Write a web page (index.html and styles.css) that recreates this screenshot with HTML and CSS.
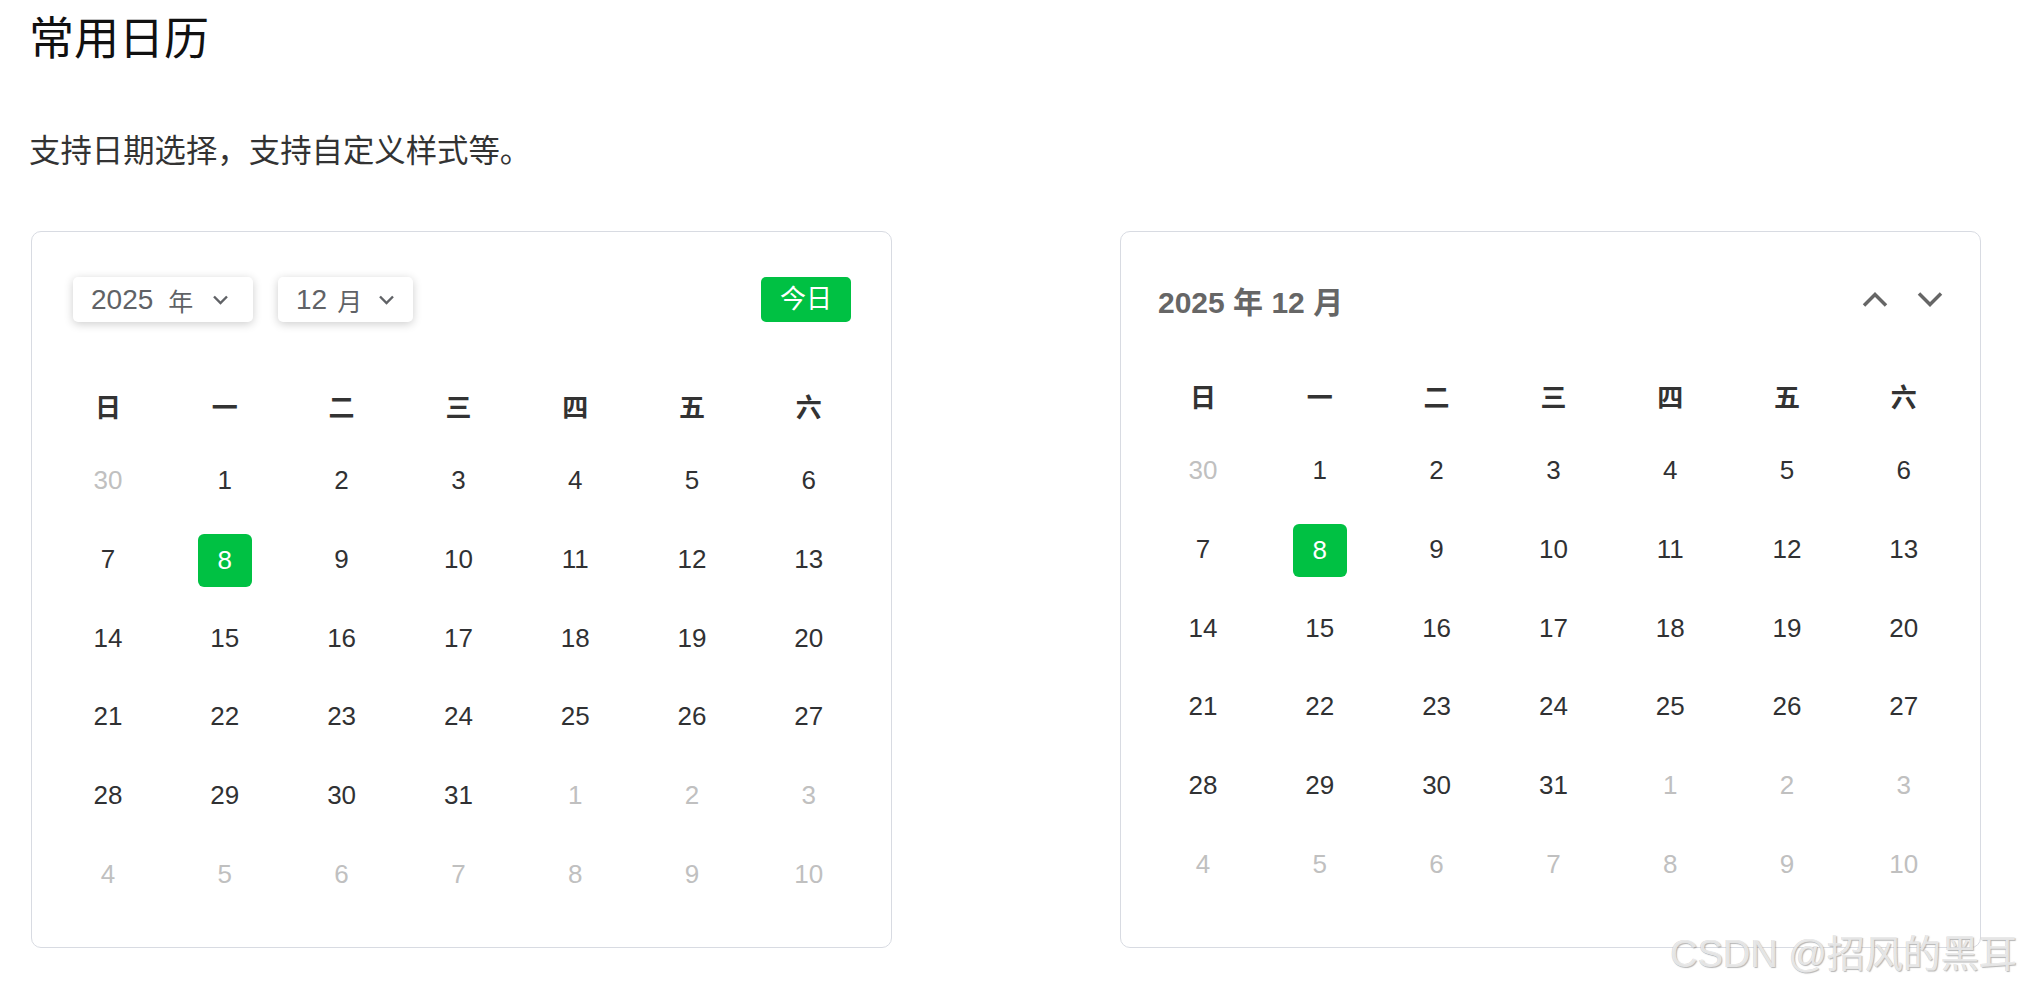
FILE: index.html
```html
<!DOCTYPE html>
<html lang="zh-CN">
<head>
<meta charset="utf-8">
<title>常用日历</title>
<link rel="stylesheet" href="styles.css">
</head>
<body>
<div class="page">
  <h1 class="title">常用日历</h1>
  <p class="desc">支持日期选择，支持自定义样式等。</p>
  <div class="cards">
    <div class="card card-a">
      <div class="head">
        <div class="dd dd-year">
          <span class="num">2025</span><span class="unit">年</span>
          <svg class="caret" width="17" height="11" viewBox="0 0 17 11"><path d="M2 2.5 L8.5 9 L15 2.5" fill="none" stroke="#606266" stroke-width="2.4"/></svg>
        </div>
        <div class="dd dd-month">
          <span class="num">12</span><span class="unit">月</span>
          <svg class="caret" width="17" height="11" viewBox="0 0 17 11"><path d="M2 2.5 L8.5 9 L15 2.5" fill="none" stroke="#606266" stroke-width="2.4"/></svg>
        </div>
        <button class="today">今日</button>
      </div>
      <div class="grid">
        <div class="wk">日</div><div class="wk">一</div><div class="wk">二</div><div class="wk">三</div><div class="wk">四</div><div class="wk">五</div><div class="wk">六</div>
        <div class="day muted">30</div><div class="day">1</div><div class="day">2</div><div class="day">3</div><div class="day">4</div><div class="day">5</div><div class="day">6</div>
        <div class="day">7</div><div class="day"><span class="sel">8</span></div><div class="day">9</div><div class="day">10</div><div class="day">11</div><div class="day">12</div><div class="day">13</div>
        <div class="day">14</div><div class="day">15</div><div class="day">16</div><div class="day">17</div><div class="day">18</div><div class="day">19</div><div class="day">20</div>
        <div class="day">21</div><div class="day">22</div><div class="day">23</div><div class="day">24</div><div class="day">25</div><div class="day">26</div><div class="day">27</div>
        <div class="day">28</div><div class="day">29</div><div class="day">30</div><div class="day">31</div><div class="day muted">1</div><div class="day muted">2</div><div class="day muted">3</div>
        <div class="day muted">4</div><div class="day muted">5</div><div class="day muted">6</div><div class="day muted">7</div><div class="day muted">8</div><div class="day muted">9</div><div class="day muted">10</div>
      </div>
    </div>
    <div class="card card-b">
      <div class="head">
        <div class="ym">2025 <span class="u">年</span> 12 <span class="u">月</span></div>
        <div class="arrows">
          <svg width="26" height="15" viewBox="0 0 26 15"><path d="M2 13.5 L13 2.5 L24 13.5" fill="none" stroke="#666" stroke-width="3.5"/></svg>
          <svg width="26" height="15" viewBox="0 0 26 15"><path d="M2 1.5 L13 12.5 L24 1.5" fill="none" stroke="#666" stroke-width="3.5"/></svg>
        </div>
      </div>
      <div class="grid">
        <div class="wk">日</div><div class="wk">一</div><div class="wk">二</div><div class="wk">三</div><div class="wk">四</div><div class="wk">五</div><div class="wk">六</div>
        <div class="day muted">30</div><div class="day">1</div><div class="day">2</div><div class="day">3</div><div class="day">4</div><div class="day">5</div><div class="day">6</div>
        <div class="day">7</div><div class="day"><span class="sel">8</span></div><div class="day">9</div><div class="day">10</div><div class="day">11</div><div class="day">12</div><div class="day">13</div>
        <div class="day">14</div><div class="day">15</div><div class="day">16</div><div class="day">17</div><div class="day">18</div><div class="day">19</div><div class="day">20</div>
        <div class="day">21</div><div class="day">22</div><div class="day">23</div><div class="day">24</div><div class="day">25</div><div class="day">26</div><div class="day">27</div>
        <div class="day">28</div><div class="day">29</div><div class="day">30</div><div class="day">31</div><div class="day muted">1</div><div class="day muted">2</div><div class="day muted">3</div>
        <div class="day muted">4</div><div class="day muted">5</div><div class="day muted">6</div><div class="day muted">7</div><div class="day muted">8</div><div class="day muted">9</div><div class="day muted">10</div>
      </div>
    </div>
  </div>
</div>
<div class="watermark">CSDN @招风的黑耳</div>
</body>
</html>
```

FILE: styles.css
```css
* { box-sizing: border-box; }

html, body {
  margin: 0;
  background: #fff;
}

body {
  font-family: "Liberation Sans", "Noto Sans CJK SC", sans-serif;
  color: #333;
}

.page {
  padding: 12px 0 0 29px;
}

.title {
  margin: 0;
  font-size: 45px;
  line-height: 56px;
  font-weight: normal;
  color: #111;
}

.desc {
  margin: 64px 0 0;
  font-size: 31.4px;
  line-height: 40px;
  color: #333;
}

.cards {
  display: flex;
  gap: 228px;
  margin: 59px 0 0 2px;
}

.card {
  width: 861px;
  height: 717px;
  border: 1px solid #d8dbe2;
  border-radius: 10px;
  background: #fff;
  padding-top: 45px;
}

.head {
  display: flex;
  align-items: center;
  height: 45px;
}

.card-a .head { padding: 0 40px 0 41px; }
.card-b .head { padding: 0 37px 0 37px; justify-content: space-between; }

.dd {
  display: flex;
  align-items: center;
  height: 45px;
  padding-left: 18px;
  background: #fff;
  border-radius: 5px;
  box-shadow: 0 2px 10px rgba(0, 0, 0, 0.2);
  color: #606266;
  font-size: 28px;
}

.dd-year { width: 180px; }
.dd-month { width: 135px; margin-left: 25px; }

.dd .unit { font-size: 25px; }
.dd-year .unit { margin-left: 15px; }
.dd-month .unit { margin-left: 10px; }
.dd-year .caret { margin-left: 19px; }
.dd-month .caret { margin-left: 16px; }

.today {
  margin-left: auto;
  width: 90px;
  height: 45px;
  padding: 0;
  border: none;
  border-radius: 5px;
  background: #00c143;
  color: #fff;
  font-family: inherit;
  font-size: 26px;
  line-height: 45px;
}

.ym {
  font-size: 30px;
  font-weight: bold;
  color: #666;
  line-height: 45px;
  padding-top: 6px;
}

.arrows {
  display: flex;
  gap: 29px;
  align-items: center;
}

.grid {
  display: grid;
  grid-template-columns: repeat(7, 116.8px);
  grid-template-rows: 72.5px repeat(6, 78.7px);
}

.card-a .grid { margin: 47px 0 0 17.6px; }
.card-b .grid { margin: 37px 0 0 23.6px; }

.wk, .day {
  display: flex;
  align-items: center;
  justify-content: center;
}

.wk {
  font-size: 26px;
  font-weight: bold;
  color: #333;
}

.day {
  font-size: 26px;
  color: #303133;
}

.day.muted { color: #c0c0c0; }

.sel {
  display: flex;
  align-items: center;
  justify-content: center;
  width: 54px;
  height: 53px;
  border-radius: 6px;
  background: #00c143;
  color: #fff;
  margin-top: 2px;
}

.watermark {
  position: absolute;
  right: 5px;
  bottom: 11px;
  font-size: 38px;
  line-height: 40px;
  color: rgba(238, 238, 238, 0.9);
  text-shadow: 1px 1px 1px rgba(110, 110, 110, 0.5), -0.5px -0.5px 0 rgba(150, 150, 150, 0.35);
  white-space: nowrap;
}
```
